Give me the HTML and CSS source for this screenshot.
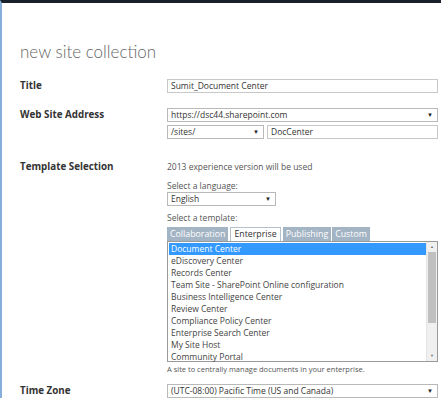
FILE: index.html
```html
<!DOCTYPE html>
<html lang="en">
<head>
    <meta charset="UTF-8">
    <title>new site collection</title>
    <link rel="stylesheet" href="styles.css">
</head>
<body>
    <div class="page">
        <h1>new site collection</h1>

        <div class="row row-title">
            <div class="label">Title</div>
            <div class="field">
                <div class="input">Sumit_Document Center</div>
            </div>
        </div>

        <div class="row row-address">
            <div class="label">Web Site Address</div>
            <div class="field">
                <div class="select">https://dsc44.sharepoint.com<span class="arrow">&#9660;</span></div>
                <div class="pair">
                    <div class="select path">/sites/<span class="arrow">&#9660;</span></div>
                    <div class="input name">DocCenter</div>
                </div>
            </div>
        </div>

        <div class="row row-template">
            <div class="label">Template Selection</div>
            <div class="field">
                <p class="note">2013 experience version will be used</p>
                <p class="caption">Select a language:</p>
                <div class="select lang">English<span class="arrow">&#9660;</span></div>
                <p class="caption">Select a template:</p>
                <div class="tabs">
                    <span class="tab">Collaboration</span>
                    <span class="tab active">Enterprise</span>
                    <span class="tab">Publishing</span>
                    <span class="tab">Custom</span>
                </div>
                <div class="listbox">
                    <ul class="items">
                        <li class="selected">Document Center</li>
                        <li>eDiscovery Center</li>
                        <li>Records Center</li>
                        <li>Team Site - SharePoint Online configuration</li>
                        <li>Business Intelligence Center</li>
                        <li>Review Center</li>
                        <li>Compliance Policy Center</li>
                        <li>Enterprise Search Center</li>
                        <li>My Site Host</li>
                        <li>Community Portal</li>
                    </ul>
                    <div class="scrollbar">
                        <span class="up">&#9650;</span>
                        <span class="thumb"></span>
                        <span class="down">&#9660;</span>
                    </div>
                </div>
                <p class="hint">A site to centrally manage documents in your enterprise.</p>
            </div>
        </div>

        <div class="row row-zone">
            <div class="label">Time Zone</div>
            <div class="field">
                <div class="select">(UTC-08:00) Pacific Time (US and Canada)<span class="arrow">&#9660;</span></div>
            </div>
        </div>
    </div>
</body>
</html>
```

FILE: styles.css
```css
html, body {
    margin: 0;
    padding: 0;
    background-color: #fff;
}
.page {
    height: 395px;
    overflow: hidden;
    border-top: 3px solid #18202b;
    border-left: 2px solid #86aedb;
    padding-left: 18px;
    font-family: "Open Sans", "Noto Sans", sans-serif;
    font-size: 8.5px;
    color: #444;
}
h1 {
    margin: 35px 0 0 0;
    height: 27px;
    font-family: "Lato", "Open Sans", sans-serif;
    font-weight: 300;
    font-size: 17px;
    line-height: 27px;
    color: #666;
}
.row {
    display: flex;
}
.label {
    width: 147px;
    font-size: 9.8px;
    font-weight: bold;
    color: #333;
    line-height: 14px;
}
.field {
    width: 271px;
}
.row-title {
    margin-top: 14px;
}
.row-address {
    margin-top: 15px;
}
.row-template {
    margin-top: 21px;
}
.row-zone {
    margin-top: 9px;
}
.input, .select {
    position: relative;
    box-sizing: border-box;
    height: 14px;
    line-height: 12px;
    border: 1px solid #b9b9b9;
    padding: 0 3px;
    color: #333;
    background-color: #fff;
    white-space: nowrap;
}
.input {
    border-color: #c8c8c8;
}
.arrow {
    position: absolute;
    right: 4px;
    top: 0;
    font-size: 6px;
    color: #222;
}
.pair {
    display: flex;
    gap: 3px;
    margin-top: 3px;
}
.path {
    width: 97px;
}
.name {
    flex: 1;
}
p {
    margin: 0;
}
.note {
    line-height: 14px;
    color: #555;
}
.caption {
    margin-top: 5px;
    line-height: 13px;
    color: #555;
}
.lang {
    width: 109px;
    margin-bottom: 2px;
}
.tabs {
    display: flex;
    gap: 1px;
    height: 14px;
    margin-top: 3px;
}
.tab {
    box-sizing: border-box;
    height: 14px;
    line-height: 14px;
    padding: 0 3px;
    font-size: 8.8px;
    background-color: #a3b4c4;
    color: #fff;
}
.tab.active {
    background-color: #fff;
    color: #333;
    border: 1px solid #b4c0cc;
    border-bottom: none;
    line-height: 13px;
    margin: 0 1px;
}
.listbox {
    display: flex;
    box-sizing: border-box;
    height: 121px;
    border: 1px solid #9a9a9a;
}
.items {
    flex: 1;
    list-style: none;
    margin: 0;
    padding: 1px 0 0 1px;
}
.items li {
    height: 12px;
    line-height: 12px;
    padding-left: 2px;
    color: #444;
}
.items li.selected {
    background-color: #3399ff;
    color: #fff;
}
.scrollbar {
    display: flex;
    flex-direction: column;
    width: 10px;
    background-color: #f0f0f0;
    border-left: 1px solid #e4e4e4;
}
.scrollbar .up, .scrollbar .down {
    height: 10px;
    line-height: 10px;
    text-align: center;
    font-size: 4px;
    color: #777;
}
.scrollbar .thumb {
    flex: 1;
    margin: 0 1px 28px 1px;
    background-color: #c0c0c0;
}
.hint {
    margin-top: 2px;
    font-size: 7.5px;
    line-height: 11px;
    color: #555;
}
```
